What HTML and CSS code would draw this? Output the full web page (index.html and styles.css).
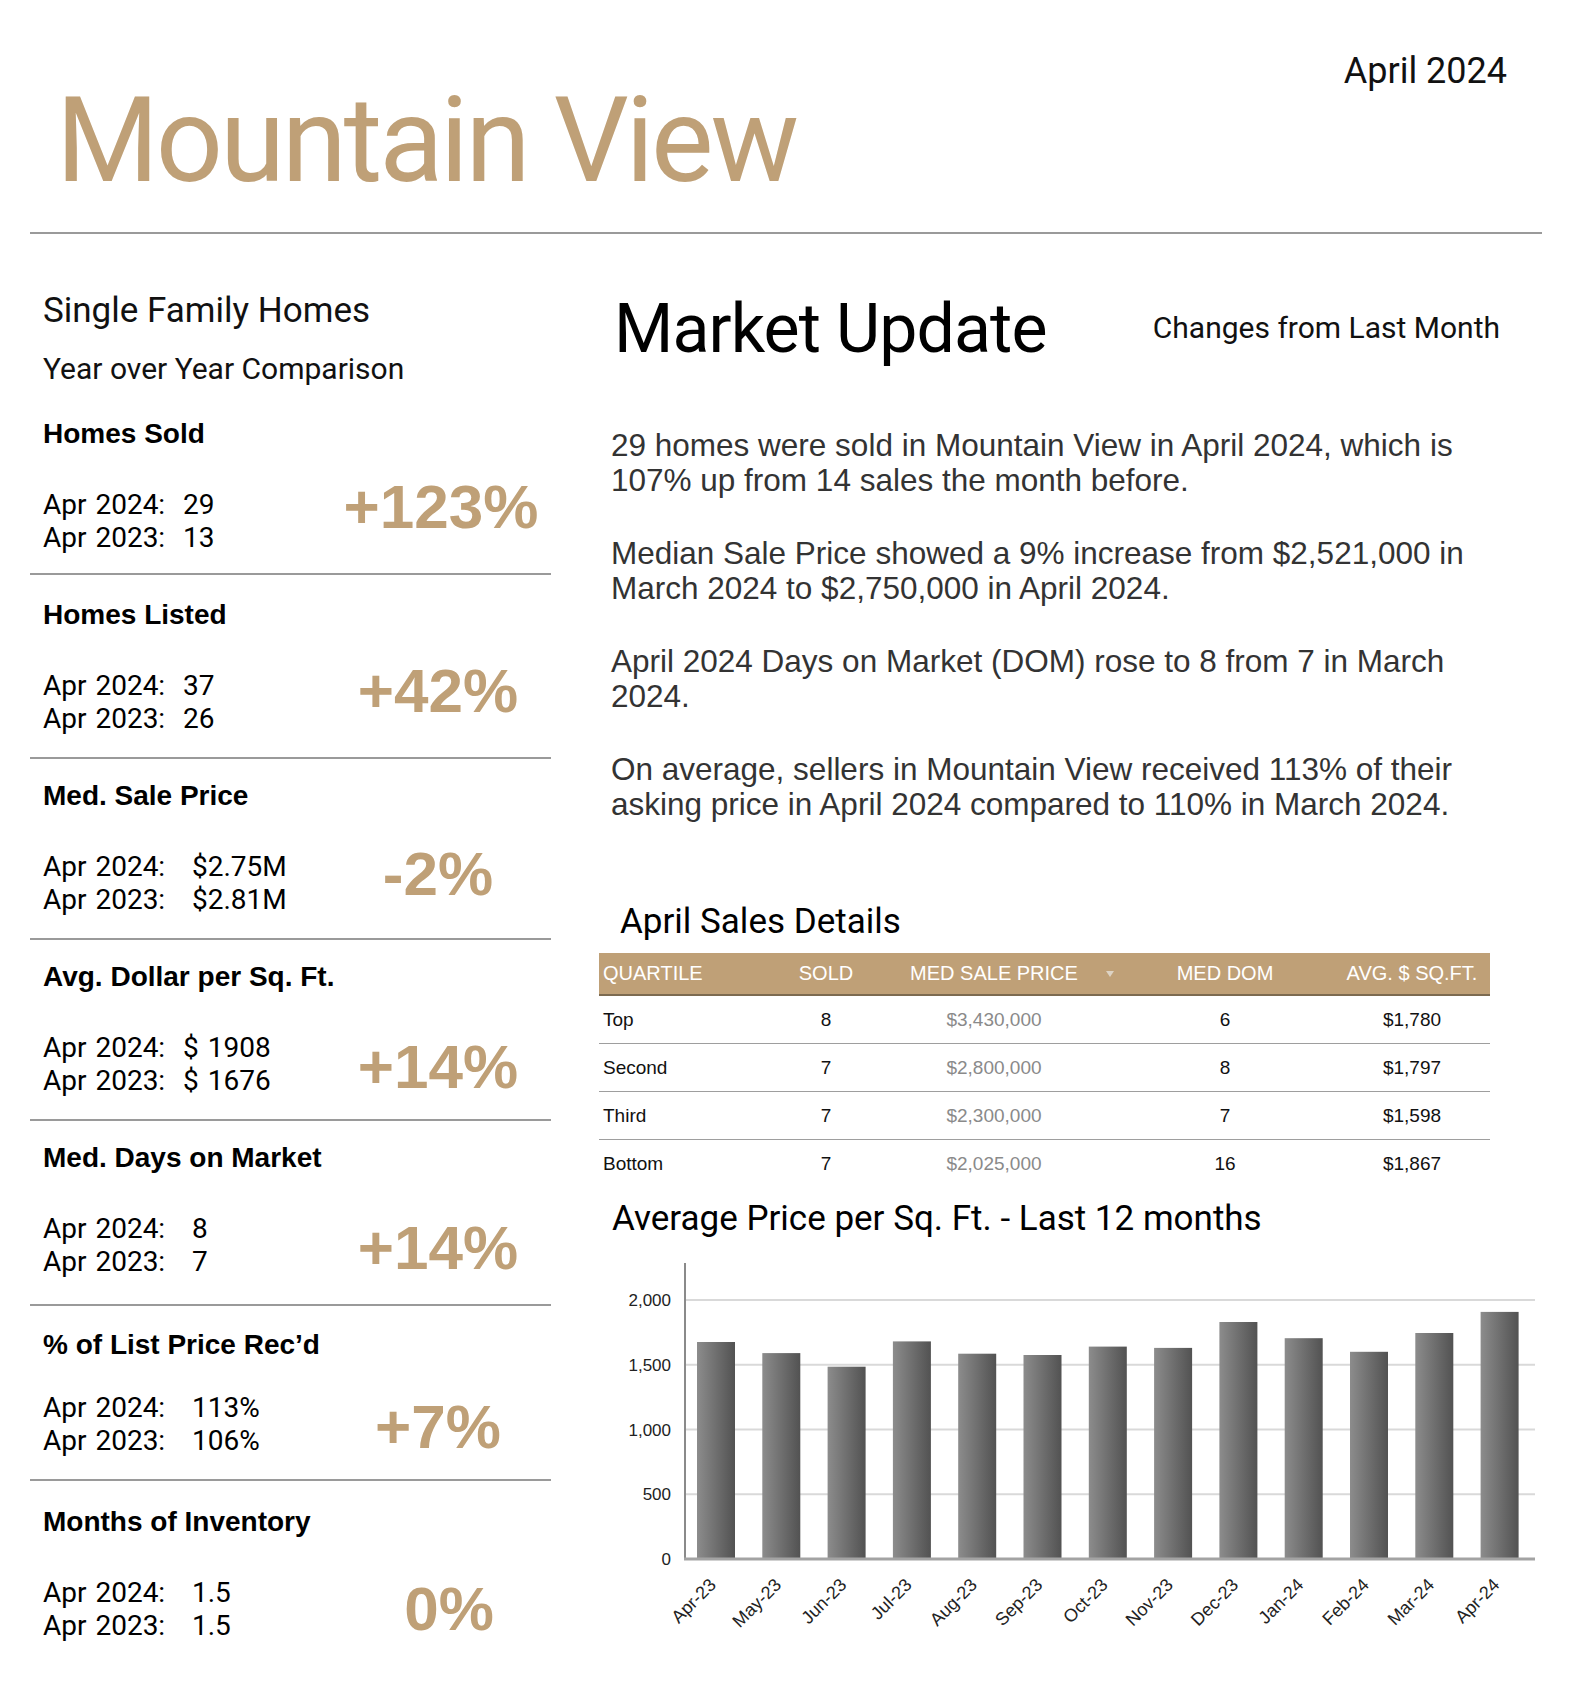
FILE: index.html
```html
<!DOCTYPE html>
<html lang="en">
<head>
<meta charset="utf-8">
<title>Mountain View Market Update - April 2024</title>
<link rel="stylesheet" href="styles.css">
</head>
<body>
<div class="page">
  <header class="masthead">
    <div class="date">April 2024</div>
    <h1 class="city">Mountain View</h1>
  </header>
  <div class="rule"></div>

  <main class="cols">
    <section class="left">
      <h2 class="seg">Single Family Homes</h2>
      <h3 class="sub">Year over Year Comparison</h3>
      <div class="stats">
        <div class="stat">
          <div class="stat-title">Homes Sold</div>
          <div class="stat-body">
            <div class="stat-lines"><div>Apr 2024:  29</div><div>Apr 2023:  13</div></div>
            <div class="stat-change lift1">+123%</div>
          </div>
        </div>
        <div class="stat stat-second">
          <div class="stat-title">Homes Listed</div>
          <div class="stat-body">
            <div class="stat-lines"><div>Apr 2024:  37</div><div>Apr 2023:  26</div></div>
            <div class="stat-change lift2">+42%</div>
          </div>
        </div>
        <div class="stat">
          <div class="stat-title">Med. Sale Price</div>
          <div class="stat-body">
            <div class="stat-lines"><div>Apr 2024:   $2.75M</div><div>Apr 2023:   $2.81M</div></div>
            <div class="stat-change lift3">-2%</div>
          </div>
        </div>
        <div class="stat">
          <div class="stat-title">Avg. Dollar per Sq. Ft.</div>
          <div class="stat-body">
            <div class="stat-lines"><div>Apr 2024:  $ 1908</div><div>Apr 2023:  $ 1676</div></div>
            <div class="stat-change">+14%</div>
          </div>
        </div>
        <div class="stat stat-tall">
          <div class="stat-title">Med. Days on Market</div>
          <div class="stat-body">
            <div class="stat-lines"><div>Apr 2024:   8</div><div>Apr 2023:   7</div></div>
            <div class="stat-change">+14%</div>
          </div>
        </div>
        <div class="stat stat-short">
          <div class="stat-title">% of List Price Rec’d</div>
          <div class="stat-body">
            <div class="stat-lines"><div>Apr 2024:   113%</div><div>Apr 2023:   106%</div></div>
            <div class="stat-change">+7%</div>
          </div>
        </div>
        <div class="stat stat-last">
          <div class="stat-title">Months of Inventory</div>
          <div class="stat-body">
            <div class="stat-lines"><div>Apr 2024:   1.5</div><div>Apr 2023:   1.5</div></div>
            <div class="stat-change shift">0%</div>
          </div>
        </div>
      </div>
    </section>

    <section class="right">
      <div class="mu-head">
        <h2 class="mu-title">Market Update</h2>
        <div class="mu-note">Changes from Last Month</div>
      </div>

      <div class="summary">
        <p>29 homes were sold in Mountain View in April 2024, which is 107% up from 14 sales the month before.</p>
        <p>Median Sale Price showed a 9% increase from $2,521,000 in March 2024 to $2,750,000 in April 2024.</p>
        <p>April 2024 Days on Market (DOM) rose to 8 from 7 in March 2024.</p>
        <p>On average, sellers in Mountain View received 113% of their asking price in April 2024 compared to 110% in March 2024.</p>
      </div>

      <h3 class="tbl-title">April Sales Details</h3>
      <div class="tbl">
        <div class="tr thead">
          <div class="c1">QUARTILE</div>
          <div class="cc">SOLD</div>
          <div class="cc">MED SALE PRICE</div>
          <div class="cc sort"><svg width="8" height="6" viewBox="0 0 8 6"><path d="M0 0H8L4 6Z" fill="#ddd3c4"/></svg></div>
          <div class="cc">MED DOM</div>
          <div class="cc c6">AVG. $ SQ.FT.</div>
        </div>
        <div class="tr trow">
          <div class="c1">Top</div><div class="cc">8</div><div class="cc price">$3,430,000</div><div></div><div class="cc">6</div><div class="cc c6">$1,780</div>
        </div>
        <div class="tr trow">
          <div class="c1">Second</div><div class="cc">7</div><div class="cc price">$2,800,000</div><div></div><div class="cc">8</div><div class="cc c6">$1,797</div>
        </div>
        <div class="tr trow">
          <div class="c1">Third</div><div class="cc">7</div><div class="cc price">$2,300,000</div><div></div><div class="cc">7</div><div class="cc c6">$1,598</div>
        </div>
        <div class="tr trow">
          <div class="c1">Bottom</div><div class="cc">7</div><div class="cc price">$2,025,000</div><div></div><div class="cc">16</div><div class="cc c6">$1,867</div>
        </div>
      </div>

      <h3 class="chart-title">Average Price per Sq. Ft. - Last 12 months</h3>
      <svg class="chart" width="942" height="400" viewBox="0 0 942 400">
        <defs>
          <linearGradient id="barg" x1="0" y1="0" x2="1" y2="0">
            <stop offset="0" stop-color="#8c8c8c"/>
            <stop offset="1" stop-color="#525252"/>
          </linearGradient>
        </defs>
        <g stroke="#d9d9d9" stroke-width="2">
          <line x1="86" y1="60" x2="935" y2="60"/>
          <line x1="86" y1="124.75" x2="935" y2="124.75"/>
          <line x1="86" y1="189.5" x2="935" y2="189.5"/>
          <line x1="86" y1="254.25" x2="935" y2="254.25"/>
        </g>
        <g class="ylab" text-anchor="end">
          <text x="71" y="66">2,000</text>
          <text x="71" y="131">1,500</text>
          <text x="71" y="196">1,000</text>
          <text x="71" y="260">500</text>
          <text x="71" y="325">0</text>
        </g>
        <g fill="url(#barg)">
          <rect x="97" y="102.0" width="38" height="217.0"/>
          <rect x="162.3" y="113.1" width="38" height="205.9"/>
          <rect x="227.6" y="126.7" width="38" height="192.3"/>
          <rect x="292.9" y="101.4" width="38" height="217.6"/>
          <rect x="358.2" y="113.7" width="38" height="205.3"/>
          <rect x="423.5" y="115.0" width="38" height="204.0"/>
          <rect x="488.8" y="106.6" width="38" height="212.4"/>
          <rect x="554.1" y="107.9" width="38" height="211.1"/>
          <rect x="619.4" y="82.0" width="38" height="237.0"/>
          <rect x="684.7" y="98.2" width="38" height="220.8"/>
          <rect x="750" y="111.8" width="38" height="207.2"/>
          <rect x="815.3" y="93.0" width="38" height="226.0"/>
          <rect x="880.6" y="71.9" width="38" height="247.1"/>
        </g>
        <line x1="85" y1="23" x2="85" y2="319" stroke="#8a8a8a" stroke-width="2"/>
        <line x1="84" y1="319" x2="935" y2="319" stroke="#a3a3a3" stroke-width="3"/>
        <g class="xlab" text-anchor="end">
          <text x="117" y="346" transform="rotate(-45 117 346)">Apr-23</text>
          <text x="182.3" y="346" transform="rotate(-45 182.3 346)">May-23</text>
          <text x="247.6" y="346" transform="rotate(-45 247.6 346)">Jun-23</text>
          <text x="312.9" y="346" transform="rotate(-45 312.9 346)">Jul-23</text>
          <text x="378.2" y="346" transform="rotate(-45 378.2 346)">Aug-23</text>
          <text x="443.5" y="346" transform="rotate(-45 443.5 346)">Sep-23</text>
          <text x="508.8" y="346" transform="rotate(-45 508.8 346)">Oct-23</text>
          <text x="574.1" y="346" transform="rotate(-45 574.1 346)">Nov-23</text>
          <text x="639.4" y="346" transform="rotate(-45 639.4 346)">Dec-23</text>
          <text x="704.7" y="346" transform="rotate(-45 704.7 346)">Jan-24</text>
          <text x="770" y="346" transform="rotate(-45 770 346)">Feb-24</text>
          <text x="835.3" y="346" transform="rotate(-45 835.3 346)">Mar-24</text>
          <text x="900.6" y="346" transform="rotate(-45 900.6 346)">Apr-24</text>
        </g>
      </svg>
    </section>
  </main>
</div>
</body>
</html>
```

FILE: styles.css
```css
* { box-sizing: border-box; }

html, body {
  margin: 0;
  padding: 0;
  background: #ffffff;
}

body {
  font-family: Roboto, "Liberation Sans", sans-serif;
  color: #111111;
}

.page {
  width: 1570px;
  padding: 0 28px 0 30px;
}

/* ---------- Masthead ---------- */
.masthead {
  display: flex;
  flex-direction: column;
}

.date {
  align-self: flex-end;
  margin: 49px 35px 0 0;
  font: 400 36px/44px Roboto, sans-serif;
  color: #111111;
}

.city {
  margin: 0;
  padding-left: 26px;
  font: 400 118px/96px Roboto, sans-serif;
  letter-spacing: -3.2px;
  color: #bfa077;
}

.rule {
  height: 2px;
  margin-top: 43px;
  background: #9a9a9a;
}

/* ---------- Columns ---------- */
.cols {
  display: grid;
  grid-template-columns: 521px 1fr;
  column-gap: 48px;
  margin-top: 56px;
}

/* ---------- Left column ---------- */
.seg {
  margin: 0;
  padding-left: 13px;
  font: 400 35px/42px Roboto, sans-serif;
  color: #111111;
}

.sub {
  margin: 18px 0 0;
  padding-left: 13px;
  font: 400 30px/38px Roboto, sans-serif;
  color: #111111;
}

.stats {
  margin-top: 9px;
}

.stat {
  padding: 20px 0 22px;
  border-bottom: 2px solid #9a9a9a;
}

.stat:first-child {
  padding-bottom: 19px;
}

.stat-second {
  padding-top: 23px;
}

.stat-tall {
  padding-bottom: 26px;
}

.stat-short {
  padding-top: 22px;
}

.stat-last {
  padding-top: 24px;
}

.stat:last-child {
  border-bottom: none;
}

.stat-title {
  padding-left: 13px;
  font: 700 28px/34px "Liberation Sans", Arial, sans-serif;
  color: #000000;
}

.stat-body {
  display: flex;
  align-items: flex-start;
  height: 66px;
  margin-top: 37px;
}

.stat-short .stat-body {
  margin-top: 29px;
}

.stat-lines {
  width: 287px;
  padding-left: 13px;
  font: 400 28px/33px Roboto, sans-serif;
  word-spacing: 2px;
  white-space: pre;
  color: #000000;
}

.stat-change {
  flex: 1;
  margin-top: 18px;
  padding-left: 8px;
  text-align: center;
  font: 700 62px/36px "Liberation Sans", Arial, sans-serif;
  color: #bfa077;
}

.stat-change.lift1 { margin-top: 1px; padding-left: 14px; }
.stat-change.lift2 { margin-top: 4px; }
.stat-change.lift3 { margin-top: 6px; }
.stat-change.shift { margin-top: 15px; padding-left: 30px; }

/* ---------- Right column ---------- */
.mu-head {
  display: flex;
  align-items: flex-start;
}

.mu-title {
  margin: 0 0 0 15px;
  font: 400 68px/78px Roboto, sans-serif;
  letter-spacing: -0.9px;
  color: #000000;
}

.mu-note {
  margin: 20px 42px 0 auto;
  font: 400 30px/36px Roboto, sans-serif;
  color: #111111;
}

.summary {
  width: 880px;
  margin: 60px 0 0 12px;
  font: 400 31.5px/35px "Liberation Sans", Arial, sans-serif;
  color: #333333;
}

.summary p {
  margin: 0 0 38px;
}

.summary p:last-child {
  margin-bottom: 0;
}

.tbl-title {
  margin: 79px 0 0 21px;
  font: 400 35px/42px Roboto, sans-serif;
  color: #000000;
}

.tbl {
  width: 891px;
  margin-top: 10px;
  font-family: "Liberation Sans", Arial, sans-serif;
}

.tr {
  display: grid;
  grid-template-columns: 161px 132px 204px 28px 202px 164px;
  align-items: center;
}

.thead {
  height: 43px;
  background: #bfa077;
  border-bottom: 2px solid #7c6a50;
  color: #ffffff;
  font-size: 20px;
}

.trow {
  height: 48px;
  border-bottom: 1px solid #9e9e9e;
  font-size: 19px;
  color: #111111;
}

.trow:last-child {
  height: 47px;
  border-bottom: none;
}

.c1 {
  padding-left: 4px;
}

.cc {
  text-align: center;
}

.c6 {
  padding-left: 8px;
}

.sort {
  display: flex;
  justify-content: center;
  align-items: center;
}

.price {
  color: #8a8a8a;
}

.chart-title {
  margin: 11px 0 0 13px;
  font: 400 35px/42px Roboto, sans-serif;
  color: #000000;
}

.chart {
  display: block;
  margin-left: 1px;
  overflow: visible;
}

.chart text {
  font-family: "Liberation Sans", Arial, sans-serif;
  fill: #222222;
}

.ylab text {
  font-size: 17px;
}

.xlab text {
  font-size: 18px;
}
```
